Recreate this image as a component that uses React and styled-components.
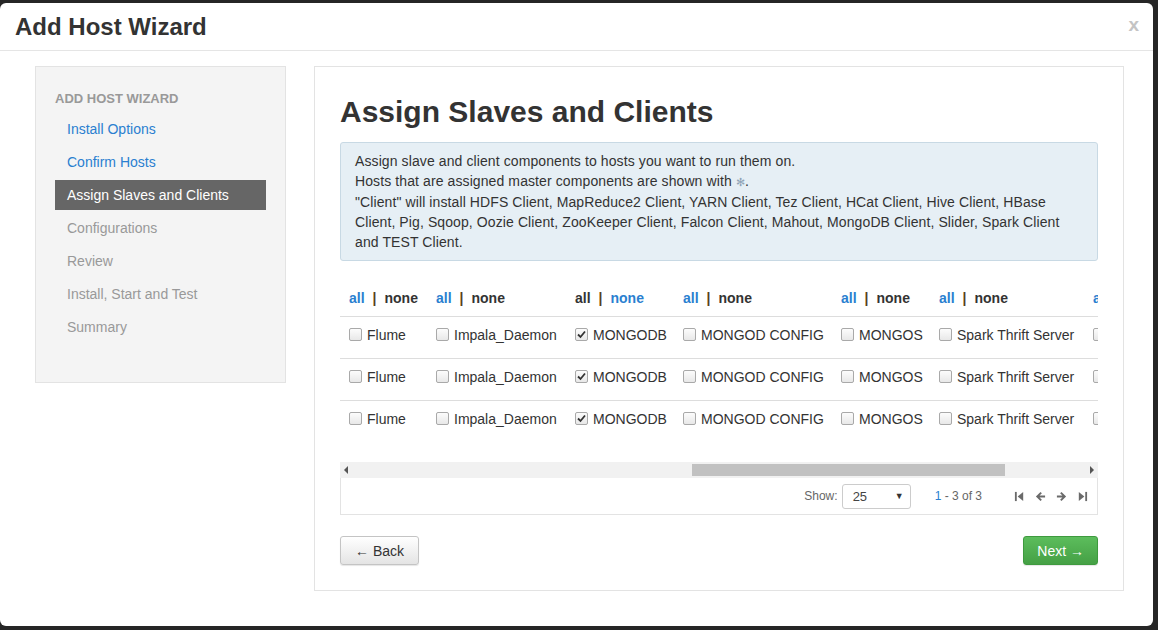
import React from 'react';
import styled, { createGlobalStyle } from 'styled-components';

const GlobalStyle = createGlobalStyle`
  html, body {
    margin: 0;
    padding: 0;
    background: #262626;
    font-family: "Liberation Sans", Arial, sans-serif;
    color: #333;
  }
`;

const Backdrop = styled.div`
  width: 1158px;
  height: 630px;
  padding-top: 3px;
  box-sizing: border-box;
  overflow: hidden;
`;

const Modal = styled.div`
  width: 1153px;
  height: 623px;
  background: #fff;
  border-radius: 6px;
  display: flex;
  flex-direction: column;
`;

const ModalHeader = styled.div`
  height: 47px;
  border-bottom: 1px solid #e5e5e5;
  display: flex;
  align-items: center;
  justify-content: space-between;
  padding: 0 14px 0 15px;
`;

const ModalTitle = styled.h3`
  margin: 0;
  font-size: 24px;
  font-weight: bold;
  color: #333;
`;

const Close = styled.span`
  font-size: 19px;
  font-weight: bold;
  color: #c4c4c4;
  margin-top: -3px;
`;

const ModalBody = styled.div`
  display: flex;
  align-items: flex-start;
  gap: 28px;
  padding: 15px 29px 0 35px;
`;

const Sidebar = styled.div`
  width: 251px;
  flex-shrink: 0;
  box-sizing: border-box;
  background: #f4f4f4;
  border: 1px solid #e3e3e3;
  padding: 22px 19px 37px 19px;
`;

const SideHeading = styled.div`
  font-size: 13px;
  font-weight: bold;
  color: #999;
  line-height: 20px;
  margin-bottom: 5px;
`;

const NavItem = styled.div`
  height: 30px;
  line-height: 30px;
  margin-bottom: 3px;
  padding-left: 12px;
  font-size: 14px;
  color: ${(p) => (p.active ? '#fff' : p.done ? '#2a7fd0' : '#999')};
  background: ${(p) => (p.active ? '#666' : 'transparent')};
`;

const Main = styled.div`
  width: 810px;
  height: 525px;
  flex-shrink: 0;
  box-sizing: border-box;
  border: 1px solid #e3e3e3;
  padding: 27px 25px 25px 25px;
  display: flex;
  flex-direction: column;
`;

const PageTitle = styled.h2`
  margin: 0 0 12px;
  font-size: 30px;
  line-height: 36px;
  font-weight: bold;
  color: #333;
`;

const Alert = styled.div`
  background: #e6eff5;
  border: 1px solid #c8d9e4;
  border-radius: 3px;
  padding: 8px 14px 8px 14px;
  font-size: 14px;
  line-height: 20px;
  letter-spacing: 0.1px;
  color: #333;
  white-space: nowrap;
`;

const Flake = styled.span`
  color: #8fa3b5;
  font-size: 11px;
`;

const TableWrap = styled.div`
  margin-top: 19px;
  overflow: hidden;
  height: 182px;
`;

const Grid = styled.table`
  border-collapse: collapse;
  table-layout: fixed;
  width: 894px;
`;

const Th = styled.th`
  height: 36px;
  padding: 0 0 0 9px;
  text-align: left;
  font-size: 14px;
  font-weight: bold;
  border-bottom: 1px solid #ddd;
  white-space: nowrap;
`;

const Td = styled.td`
  height: 35px;
  padding: 0 0 6px 9px;
  font-size: 14px;
  color: #333;
  border-bottom: ${(p) => (p.last ? 'none' : '1px solid #ddd')};
  white-space: nowrap;
`;

const Link = styled.span`
  color: ${(p) => (p.blue ? '#2a7fd0' : '#333')};
`;

const Sep = styled.span`
  color: #5a4020;
  margin: 0 8px;
`;

const CellLabel = styled.label`
  display: flex;
  align-items: center;
  gap: 5px;
`;

const Box = styled.span`
  width: 11px;
  height: 11px;
  border: 1px solid #a9a9a9;
  border-radius: 2px;
  background: linear-gradient(#fcfcfc, #e8e8e8);
  display: inline-flex;
  align-items: center;
  justify-content: center;
  flex-shrink: 0;
`;

const Scrollbar = styled.div`
  height: 16px;
  background: #f1f1f1;
  display: flex;
  align-items: center;
  justify-content: space-between;
  padding: 0 4px;
  position: relative;
`;

const Thumb = styled.div`
  position: absolute;
  top: 2px;
  height: 12px;
  background: #c1c1c1;
`;

const Footer = styled.div`
  height: 36px;
  border: 1px solid #e3e3e3;
  border-top: none;
  display: flex;
  align-items: center;
  justify-content: flex-end;
  padding-right: 9px;
  font-size: 12px;
  color: #666;
`;

const Select = styled.div`
  width: 69px;
  height: 25px;
  box-sizing: border-box;
  border: 1px solid #ccc;
  border-radius: 3px;
  margin-left: 4px;
  display: flex;
  align-items: center;
  justify-content: space-between;
  padding: 0 6px 0 10px;
  font-size: 13px;
  color: #444;
`;

const Caret = styled.span`
  font-size: 9px;
  color: #333;
`;

const Range = styled.span`
  margin-left: 24px;
  margin-right: 32px;
  color: #666;
  b {
    font-weight: normal;
    color: #2a7fd0;
  }
`;

const Pager = styled.div`
  display: flex;
  gap: 10px;
  align-items: center;
`;

const Actions = styled.div`
  display: flex;
  justify-content: space-between;
  margin-top: 21px;
`;

const Button = styled.button`
  height: 29px;
  padding: 0 ${(p) => (p.primary ? '13px' : '14px')};
  font-family: "Liberation Sans", Arial, sans-serif;
  font-size: 14px;
  border-radius: 3px;
  border: 1px solid ${(p) => (p.primary ? '#3e9a3e' : '#c4c4c4')};
  color: ${(p) => (p.primary ? '#fff' : '#333')};
  background: ${(p) =>
    p.primary
      ? 'linear-gradient(#5cbd5c, #45a045)'
      : 'linear-gradient(#ffffff, #e4e4e4)'};
  box-shadow: 0 1px 1px rgba(0, 0, 0, 0.1);
`;

const Check = () => (
  <svg width="9" height="9" viewBox="0 0 9 9">
    <path d="M1 4.5 L3.5 7 L8 1.5" stroke="#333" strokeWidth="1.8" fill="none" />
  </svg>
);

const Checkbox = ({ checked }) => <Box>{checked ? <Check /> : null}</Box>;

const Tri = ({ dir }) => (
  <svg width="5" height="8" viewBox="0 0 5 8">
    <path d={dir === 'left' ? 'M4 0 L0 4 L4 8 Z' : 'M1 0 L5 4 L1 8 Z'} fill="#555" />
  </svg>
);

const PagerIcon = ({ kind }) => {
  const paths = {
    first: <><rect x="1" y="1" width="2" height="10" /><path d="M10 1 L4 6 L10 11 Z" /></>,
    prev: <path d="M1 6 L6 1 L7.5 2.5 L5 5 L11 5 L11 7 L5 7 L7.5 9.5 L6 11 Z" />,
    next: <path d="M11 6 L6 1 L4.5 2.5 L7 5 L1 5 L1 7 L7 7 L4.5 9.5 L6 11 Z" />,
    last: <><path d="M2 1 L8 6 L2 11 Z" /><rect x="9" y="1" width="2" height="10" /></>,
  };
  return (
    <svg width="11" height="11" viewBox="0 0 12 12" fill="#6a6a6a">
      {paths[kind]}
    </svg>
  );
};

const steps = [
  { label: 'Install Options', done: true },
  { label: 'Confirm Hosts', done: true },
  { label: 'Assign Slaves and Clients', active: true },
  { label: 'Configurations' },
  { label: 'Review' },
  { label: 'Install, Start and Test' },
  { label: 'Summary' },
];

const columns = [
  { name: 'Flume', width: 87 },
  { name: 'Impala_Daemon', width: 139 },
  { name: 'MONGODB', width: 108, checked: true, allSelected: true },
  { name: 'MONGOD CONFIG', width: 158 },
  { name: 'MONGOS', width: 98 },
  { name: 'Spark Thrift Server', width: 154 },
  { name: 'Client', width: 150 },
];

const rows = [1, 2, 3];

const App = () => {
  return (
    <Backdrop>
      <GlobalStyle />
      <Modal>
        <ModalHeader>
          <ModalTitle>Add Host Wizard</ModalTitle>
          <Close>x</Close>
        </ModalHeader>
        <ModalBody>
          <Sidebar>
            <SideHeading>ADD HOST WIZARD</SideHeading>
            {steps.map((s) => (
              <NavItem key={s.label} active={s.active} done={s.done}>
                {s.label}
              </NavItem>
            ))}
          </Sidebar>
          <Main>
            <PageTitle>Assign Slaves and Clients</PageTitle>
            <Alert>
              Assign slave and client components to hosts you want to run them on.
              <br />
              Hosts that are assigned master components are shown with <Flake>✻</Flake>.
              <br />
              "Client" will install HDFS Client, MapReduce2 Client, YARN Client, Tez Client, HCat Client, Hive Client, HBase
              <br />
              Client, Pig, Sqoop, Oozie Client, ZooKeeper Client, Falcon Client, Mahout, MongoDB Client, Slider, Spark Client
              <br />
              and TEST Client.
            </Alert>
            <TableWrap>
              <Grid>
                <colgroup>
                  {columns.map((c) => (
                    <col key={c.name} style={{ width: c.width }} />
                  ))}
                </colgroup>
                <thead>
                  <tr>
                    {columns.map((c) => (
                      <Th key={c.name}>
                        <Link blue={!c.allSelected}>all</Link>
                        <Sep>|</Sep>
                        <Link blue={c.allSelected}>none</Link>
                      </Th>
                    ))}
                  </tr>
                </thead>
                <tbody>
                  {rows.map((r, i) => (
                    <tr key={r}>
                      {columns.map((c) => (
                        <Td key={c.name} last={i === rows.length - 1}>
                          <CellLabel>
                            <Checkbox checked={c.checked} />
                            {c.name}
                          </CellLabel>
                        </Td>
                      ))}
                    </tr>
                  ))}
                </tbody>
              </Grid>
            </TableWrap>
            <Scrollbar>
              <Tri dir="left" />
              <Thumb style={{ left: 352, width: 313 }} />
              <Tri dir="right" />
            </Scrollbar>
            <Footer>
              Show:
              <Select>
                25
                <Caret>▼</Caret>
              </Select>
              <Range>
                <b>1</b> - 3 of 3
              </Range>
              <Pager>
                <PagerIcon kind="first" />
                <PagerIcon kind="prev" />
                <PagerIcon kind="next" />
                <PagerIcon kind="last" />
              </Pager>
            </Footer>
            <Actions>
              <Button>← Back</Button>
              <Button primary>Next →</Button>
            </Actions>
          </Main>
        </ModalBody>
      </Modal>
    </Backdrop>
  );
};

export default App;
